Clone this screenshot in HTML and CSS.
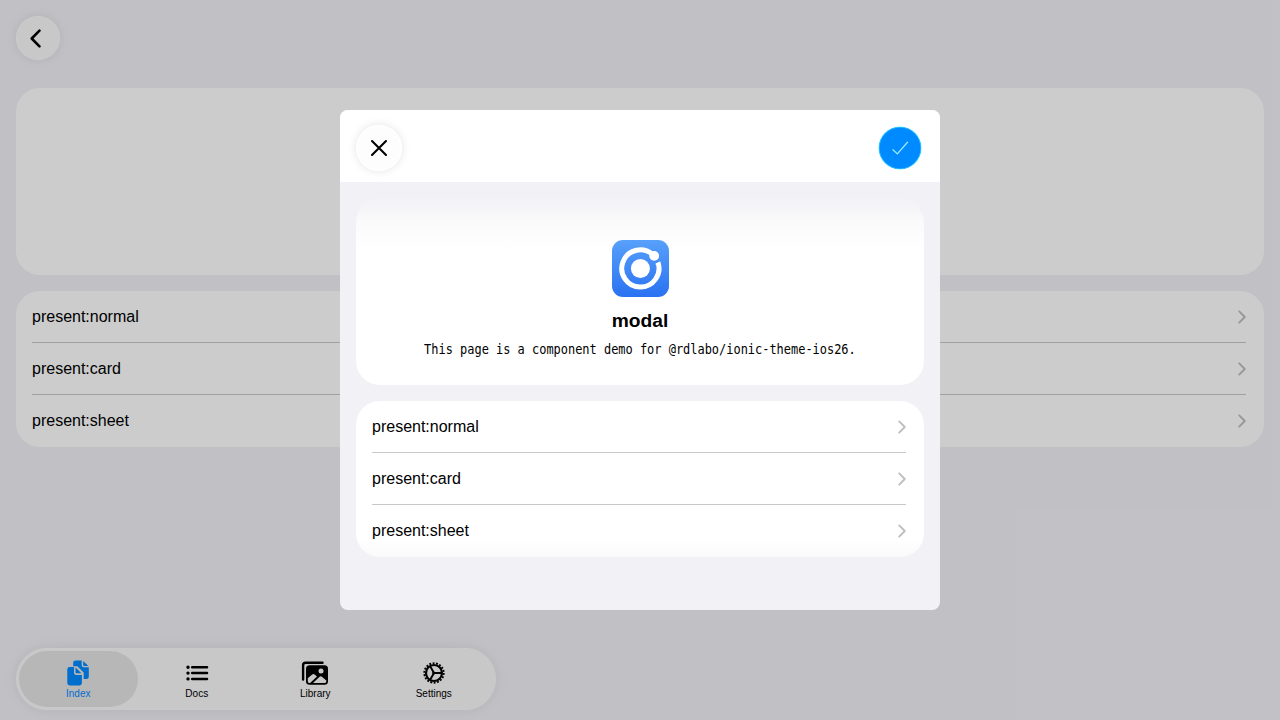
FILE: index.html
```html
<!DOCTYPE html>
<html lang="en">
<head>
<meta charset="utf-8">
<title>modal</title>
<link rel="stylesheet" href="styles.css">
</head>
<body>
<svg class="defs" width="0" height="0">
  <symbol id="chevron" viewBox="0 0 10 16"><path d="M2.200 2.400L7.800 8l-5.600 5.600" fill="none" stroke="currentColor" stroke-width="1.900" stroke-linecap="round" stroke-linejoin="round"/></symbol>
</svg>
<div class="page">
  <header class="page-header">
    <button class="round-button" aria-label="Back">
      <svg width="44" height="44" viewBox="0 0 44 44"><path d="M23.500 14.700L15.700 22.500l7.800 7.800" fill="none" stroke="#000" stroke-width="2.600" stroke-linecap="round" stroke-linejoin="round"/></svg>
    </button>
  </header>
  <main class="content">
    <section class="card hero"></section>
    <section class="card list">
      <div class="item"><span>present:normal</span><svg class="chevron"><use href="#chevron"/></svg></div>
      <div class="item"><span>present:card</span><svg class="chevron"><use href="#chevron"/></svg></div>
      <div class="item"><span>present:sheet</span><svg class="chevron"><use href="#chevron"/></svg></div>
    </section>
  </main>
  <nav class="tab-bar">
    <a class="tab selected">
      <svg width="30" height="30" viewBox="0 0 30 30" fill="currentColor">
        <path d="M10.200 4.800Q10.200 2.400 12.600 2.400H18.700v4.900q0 1.900 1.900 1.900H25.800v9.500q0 2.200-2.200 2.200H20.700V14.600L14.300 8.200h-4.100z"/>
        <path d="M20.200 2.900l5.200 5h-4.200q-1 0-1-1z"/>
        <path d="M4.300 11.500Q4.300 9.100 6.700 9.100H11v5.700q0 2.200 2.200 2.200H18.900v8.100q0 2.400-2.400 2.400H6.700q-2.400 0-2.400-2.400z"/>
        <path d="M12.500 9.500q.3.100.600.400l5.300 5.300h-4.900q-1 0-1-1z"/>
      </svg>
      <span>Index</span>
    </a>
    <a class="tab">
      <svg width="30" height="30" viewBox="0 0 30 30" fill="none" stroke="currentColor" stroke-linecap="round">
        <path d="M10.200 9.300H25M10.200 15.100H25M10.200 20.900H25" stroke-width="2.500"/>
        <path d="M6 9.300h.01M6 15.100h.01M6 20.900h.01" stroke-width="3.400"/>
      </svg>
      <span>Docs</span>
    </a>
    <a class="tab">
      <svg width="30" height="30" viewBox="0 0 30 30">
        <path d="M3.100 21.500V7.200Q3.100 4.700 5.600 4.700H22.500" fill="none" stroke="currentColor" stroke-width="2.400" stroke-linecap="round"/>
        <rect x="6" y="7.300" width="22" height="19.500" rx="3.500" fill="currentColor"/>
        <circle class="cutout" cx="21" cy="13" r="2.500"/>
        <path class="cutout" d="M7.800 20.300l4.400-3.900q1.200-1 2.400 0l2.400 2-6.900 6.700H9.700q-1.900 0-1.900-1.900zM13 25.100l6.600-6.400q1.100-1 2.300 0l4.400 3.800v.7q0 1.900-1.900 1.900z"/>
      </svg>
      <span>Library</span>
    </a>
    <a class="tab">
      <svg width="30" height="30" viewBox="0 0 30 30" fill="none" stroke="currentColor">
        <circle cx="15" cy="15" r="9.700" stroke-width="1.900" stroke-dasharray="1.900 1.486"/>
        <circle cx="15" cy="15" r="8" stroke-width="2.200"/>
        <path d="M15 15h7M15 15l-3.700-6.500M15 15l-3.700 6.500" stroke-width="1.900"/>
        <circle cx="14.700" cy="15" r="1.500" fill="currentColor" stroke="none"/>
      </svg>
      <span>Settings</span>
    </a>
  </nav>
</div>
<div class="backdrop">
  <div class="modal" role="dialog">
    <header class="modal-header">
      <button class="close-button" aria-label="Close">
        <svg width="46" height="46" viewBox="0 0 46 46"><path d="M16 16l14 14M30 16L16 30" stroke="#000" stroke-width="2.100" stroke-linecap="round"/></svg>
      </button>
      <button class="confirm-button" aria-label="Confirm">
        <svg width="42" height="42" viewBox="0 0 42 42"><path d="M14 22.700l4.300 4.200L28.500 15.200" fill="none" stroke="#9bebff" stroke-width="1.300" stroke-linecap="round" stroke-linejoin="round"/></svg>
      </button>
    </header>
    <div class="modal-content">
      <section class="card intro">
        <svg class="logo" width="57" height="57" viewBox="0 0 57 57">
          <defs><linearGradient id="blue" x1="0" y1="0" x2="0" y2="1"><stop offset="0" stop-color="#57a0fb"/><stop offset="1" stop-color="#2a72f1"/></linearGradient></defs>
          <rect width="57" height="57" rx="11" fill="url(#blue)"/>
          <circle cx="28.400" cy="28.500" r="9.500" fill="#fff"/>
          <path d="M40.200 14.100A18.600 18.600 0 1 0 46 22.500" fill="none" stroke="#fff" stroke-width="5"/>
          <circle cx="42.200" cy="15.900" r="4.900" fill="#fff"/>
          <path d="M43.300 24.500l5-3.400-1.700 5z" fill="#fff"/>
        </svg>
        <h1>modal</h1>
        <p>This page is a component demo for @rdlabo/ionic-theme-ios26.</p>
      </section>
      <section class="card list">
        <div class="item"><span>present:normal</span><svg class="chevron"><use href="#chevron"/></svg></div>
        <div class="item"><span>present:card</span><svg class="chevron"><use href="#chevron"/></svg></div>
        <div class="item"><span>present:sheet</span><svg class="chevron"><use href="#chevron"/></svg></div>
      </section>
    </div>
  </div>
</div>
</body>
</html>
```
FILE: styles.css
```css
* { box-sizing: border-box; }
body { margin: 0; font-family: "Liberation Sans", Arial, sans-serif; font-size: 16px; color: #000; overflow: hidden; }
button { border: 0; padding: 0; display: block; border-radius: 50%; }
button svg { display: block; }
.defs { position: absolute; }
.page { height: 720px; background: #f2f1f6; padding: 16px 16px 10px; display: flex; flex-direction: column; }
.page-header { height: 72px; }
.round-button { width: 44px; height: 44px; background: #fafafc; box-shadow: 0 0 10px 2px rgba(0,0,0,.06), inset 0 0 1px 1px rgba(255,255,255,.7); }
.content { flex: 1; display: flex; flex-direction: column; gap: 16px; }
.card { background: #fff; border-radius: 24px; }
.hero { height: 187px; }
.list { height: 156px; padding: 0 17px 0 16px; }
.item { height: 52px; display: flex; align-items: center; justify-content: space-between; line-height: 20px; margin-right: 1px; border-bottom: 1px solid #c8c7cc; }
.item:last-child { border-bottom-color: transparent; }
.chevron { width: 10px; height: 16px; color: #bebebf; margin: 1px -1px 0 0; }
.tab-bar { width: 480px; height: 62px; padding: 3px; border-radius: 31px; background: #fafafc; display: flex; box-shadow: 0 0 12px 2px rgba(0,0,0,.06), inset 0 0 1px 1px rgba(255,255,255,.5); }
.tab { flex: 1; display: flex; flex-direction: column; align-items: center; border-radius: 28px; padding-top: 7px; font-size: 10px; line-height: 12px; }
.tab svg { display: block; height: 30px; flex: none; }
.selected { background: #e5e5e7; color: #008aff; }
.cutout { fill: #fafafc; }
.backdrop { position: absolute; inset: 0; background: rgba(0,0,0,.2); display: flex; align-items: center; justify-content: center; }
.modal { width: 600px; height: 500px; border-radius: 8px; overflow: hidden; background: #f2f1f6; }
.modal-header { height: 72px; background: #fff; display: flex; align-items: center; justify-content: space-between; padding: 4px 19px 0 16px; }
.close-button { width: 46px; height: 46px; background: #fdfdfd; box-shadow: 0 0 9px 1px rgba(0,0,0,.09), inset 0 0 0 1px #fff; }
.confirm-button { width: 42px; height: 42px; background: #008aff; box-shadow: 0 0 0 .5px #62e4ff, inset 0 0 0 .5px #35caff; }
.modal-content { padding: 16px; display: flex; flex-direction: column; gap: 16px; }
.intro { height: 187px; padding-top: 42px; display: flex; flex-direction: column; align-items: center; background: linear-gradient(#f3f2f7 0, #f5f5f8 10px, #fafafb 23px, #fdfdfd 40px, #fff 55px); }
.logo { display: block; }
h1 { margin: 13px 0 0; font-size: 19.2px; line-height: 22px; font-weight: bold; }
p { margin: 7px 0 0; font-family: "DejaVu Sans Mono", monospace; font-size: 14.4px; line-height: 20px; white-space: nowrap; transform: scaleX(.8304); }
.modal .list { background: linear-gradient(#fff 137px, #fafafb 156px); }
```
